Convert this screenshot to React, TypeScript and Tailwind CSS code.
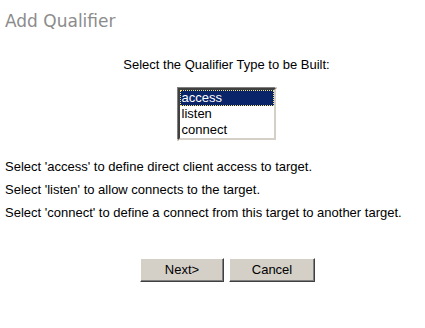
import React from 'react'

const options = ['access', 'listen', 'connect']

const App = () => {
  return (
    <div className="w-[425px] h-[328px] bg-white font-['Liberation_Sans',Arial,sans-serif] text-[13px] text-black">
      <h1 className="pl-[5px] pt-[11px] text-[17px] leading-[20px] text-[#8c8c8c] font-['DejaVu_Sans',Verdana,sans-serif]">
        Add Qualifier
      </h1>
      <p className="mt-[26px] pl-[28px] text-center leading-[15px]">Select the Qualifier Type to be Built:</p>

      <div className="flex justify-center mt-[15px] pl-[28px]">
        <div className="w-[100px] border border-[#d4d0c8]">
          <div className="border-2 border-t-[#404040] border-l-[#404040] border-r-[#d4d0c8] border-b-[#d4d0c8] shadow-[-1px_-1px_0_#808080,1px_1px_0_#ffffff] bg-white leading-[16px]">
            {options.map((o, i) => (
              <div
                key={o}
                className={
                  i === 0
                    ? 'h-[16px] bg-[#0a246a] text-white outline-1 outline-dotted outline-[#f5e37a] -outline-offset-1 pl-[2px]'
                    : 'h-[16px] pl-[2px]'
                }
              >
                {o}
              </div>
            ))}
          </div>
        </div>
      </div>

      <div className="mt-[18px] pl-[5px] flex flex-col gap-[8px] leading-[15px]">
        <p>Select 'access' to define direct client access to target.</p>
        <p>Select 'listen' to allow connects to the target.</p>
        <p>Select 'connect' to define a connect from this target to another target.</p>
      </div>

      <div className="flex justify-center gap-[5px] mt-[38px] pl-[30px]">
        <button className="w-[84px] h-[24px] bg-[#d4d0c8] border border-t-white border-l-white border-r-[#404040] border-b-[#404040] shadow-[inset_-1px_-1px_0_#808080] leading-[20px]">
          Next&gt;
        </button>
        <button className="w-[86px] h-[24px] bg-[#d4d0c8] border border-t-white border-l-white border-r-[#404040] border-b-[#404040] shadow-[inset_-1px_-1px_0_#808080] leading-[20px]">
          Cancel
        </button>
      </div>
    </div>
  )
}

export default App
